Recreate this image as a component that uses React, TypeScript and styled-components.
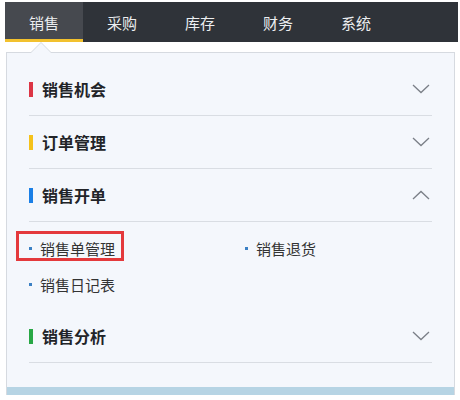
import React from 'react';
import styled, { createGlobalStyle } from 'styled-components';

const GlobalStyle = createGlobalStyle`
  body {
    margin: 0;
    background: #ffffff;
    font-family: "Noto Sans CJK SC", "Noto Sans", sans-serif;
  }
`;

const Page = styled.div`
  padding: 2px 2px 0 5px;
`;

const NavBar = styled.div`
  display: flex;
  height: 40px;
  background: #2f3339;
`;

const NavTab = styled.div<{ active?: boolean }>`
  width: 78px;
  box-sizing: border-box;
  display: flex;
  align-items: center;
  justify-content: center;
  font-size: 15px;
  color: #eceef0;
  background: ${p => (p.active ? '#46494f' : 'transparent')};
  border-bottom: 3px solid ${p => (p.active ? '#f2c12e' : 'transparent')};
  padding-top: 3px;
`;

const Panel = styled.div`
  position: relative;
  margin: 10px 1px 0 1px;
  width: 449px;
  box-sizing: border-box;
  background: #f4f7fc;
  border: 1px solid #d6dae0;
  border-bottom: none;

  /* caret pointing at the active tab */
  &::before,
  &::after {
    content: '';
    position: absolute;
    left: 23px;
    width: 0;
    height: 0;
    border-left: 11px solid transparent;
    border-right: 11px solid transparent;
  }
  &::before {
    top: -11px;
    border-bottom: 11px solid #d6dae0;
  }
  &::after {
    top: -10px;
    border-bottom: 11px solid #f4f7fc;
  }
`;

const PanelBody = styled.div`
  padding: 10px 22px 24px 22px;
`;

const SectionHeader = styled.div`
  height: 52px;
  display: flex;
  align-items: center;
  border-bottom: 1px solid #d9dde3;
`;

const ColorBar = styled.span<{ color: string }>`
  width: 4px;
  height: 15px;
  background: ${p => p.color};
  margin-right: 9px;
`;

const SectionTitle = styled.span`
  flex: 1;
  font-size: 16px;
  font-weight: 700;
  color: #222428;
`;

const Chevron = styled.svg`
  width: 18px;
  height: 10px;
  margin-right: 2px;
`;

const ItemGrid = styled.div`
  display: grid;
  grid-template-columns: 216px 1fr;
  padding: 8px 0 8px 0;
`;

const Item = styled.div<{ highlighted?: boolean }>`
  position: relative;
  height: 36px;
  display: flex;
  align-items: center;
  font-size: 15px;
  line-height: 1;
  color: #333;

  ${p =>
    p.highlighted &&
    `
    &::after {
      content: '';
      position: absolute;
      left: -13px;
      top: 1px;
      width: 108px;
      height: 30px;
      box-sizing: border-box;
      border: 3px solid #e4393c;
    }
  `}
`;

const Bullet = styled.span`
  width: 3px;
  height: 3px;
  background: #3b80c4;
  margin-right: 8px;
`;

const FooterStrip = styled.div`
  height: 8px;
  background: #b6d4e4;
`;

const ChevronIcon = ({ up }: { up?: boolean }) => (
  <Chevron viewBox="0 0 18 10">
    <path
      d={up ? 'M1 9 L9 1.5 L17 9' : 'M1 1 L9 8.5 L17 1'}
      fill="none"
      stroke="#7a7f87"
      strokeWidth="1.3"
    />
  </Chevron>
);

const tabs = ['销售', '采购', '库存', '财务', '系统'];

const App: React.FC = () => {
  return (
    <Page>
      <GlobalStyle />
      <NavBar>
        {tabs.map((t, i) => (
          <NavTab key={t} active={i === 0}>
            {t}
          </NavTab>
        ))}
      </NavBar>

      <Panel>
        <PanelBody>
          <SectionHeader>
            <ColorBar color="#dc3545" />
            <SectionTitle>销售机会</SectionTitle>
            <ChevronIcon />
          </SectionHeader>

          <SectionHeader>
            <ColorBar color="#f5c21b" />
            <SectionTitle>订单管理</SectionTitle>
            <ChevronIcon />
          </SectionHeader>

          <SectionHeader>
            <ColorBar color="#1a7fe6" />
            <SectionTitle>销售开单</SectionTitle>
            <ChevronIcon up />
          </SectionHeader>
          <ItemGrid>
            <Item highlighted>
              <Bullet />
              销售单管理
            </Item>
            <Item>
              <Bullet />
              销售退货
            </Item>
            <Item>
              <Bullet />
              销售日记表
            </Item>
          </ItemGrid>

          <SectionHeader>
            <ColorBar color="#28a745" />
            <SectionTitle>销售分析</SectionTitle>
            <ChevronIcon />
          </SectionHeader>
        </PanelBody>
        <FooterStrip />
      </Panel>
    </Page>
  );
};

export default App;
